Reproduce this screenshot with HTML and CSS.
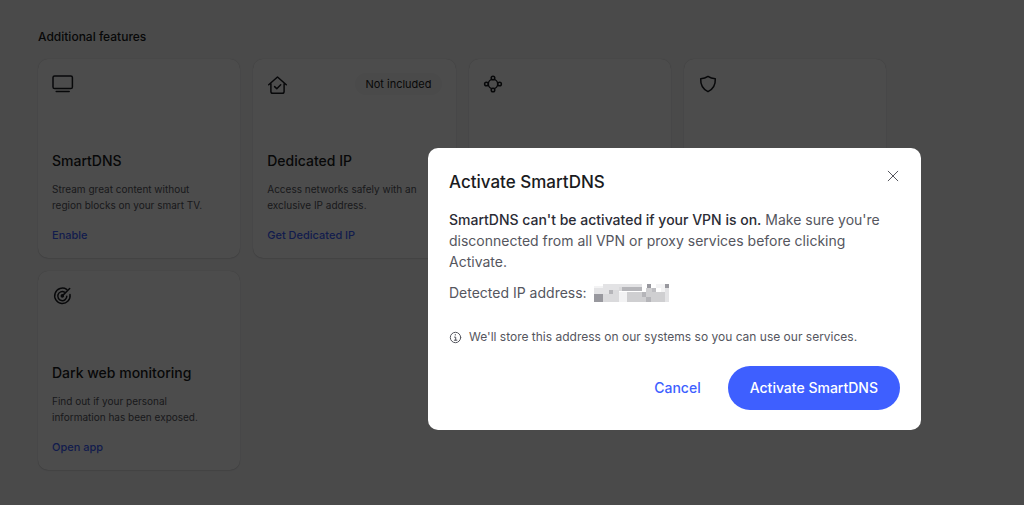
FILE: index.html
```html
<!DOCTYPE html>
<html lang="en">

<head>
    <meta charset="UTF-8">
    <meta name="viewport" content="width=device-width, initial-scale=1.0">
    <title>Additional features</title>

    <link rel="stylesheet" href="styles.css">
</head>

<body>
    <main class="features">
        <h2>Additional features</h2>
        <div class="grid">
            <article class="card">
                <div class="card-top">
                    <svg class="icon" viewBox="0 0 22 22">
                        <rect x="1" y="3" width="19.4" height="12.6" rx="1.6" />
                        <path d="M4.2 18.5h13" />
                    </svg>
                </div>
                <h3>SmartDNS</h3>
                <p>Stream great content without region blocks on your smart TV.</p>
                <a href="#">Enable</a>
            </article>

            <article class="card">
                <div class="card-top">
                    <svg class="icon" viewBox="0 0 22 22">
                        <path d="M1.7 11.8L10.5 4l8.8 7.8M3.9 10.4v8c0 1.2.6 1.8 1.8 1.8h9.6c1.2 0 1.8-.6 1.8-1.8v-8M7.6 13.6l2.2 2.2 3.9-4" />
                    </svg>
                    <span class="badge">Not included</span>
                </div>
                <h3>Dedicated IP</h3>
                <p>Access networks safely with an exclusive IP address.</p>
                <a href="#">Get Dedicated IP</a>
            </article>

            <article class="card">
                <div class="card-top">
                    <svg class="icon" viewBox="0 0 22 22">
                        <circle cx="10" cy="11" r="4.7" />
                        <g class="node">
                            <circle cx="10" cy="5" r="1.8" />
                            <circle cx="10" cy="17" r="1.8" />
                            <circle cx="3.4" cy="11" r="1.8" />
                            <circle cx="16.6" cy="11" r="1.8" />
                        </g>
                    </svg>
                </div>
            </article>

            <article class="card">
                <div class="card-top">
                    <svg class="icon" viewBox="0 0 22 22">
                        <path d="M10 3.4c2.2 1.6 4.4 2.2 7.3 2.3.3 6-1.8 10.2-7.3 13C4.5 15.9 2.4 11.7 2.7 5.7 5.6 5.6 7.8 5 10 3.4z" />
                    </svg>
                </div>
            </article>

            <article class="card">
                <div class="card-top">
                    <svg class="icon" viewBox="0 0 22 22">
                        <path d="M14.7 4.4A7.7 7.7 0 1 0 18 9.6M12.5 7.2A4.5 4.5 0 1 0 14.8 11.2M10.3 10.9L17.7 3.5" />
                        <circle class="dot" cx="10.3" cy="10.9" r="1.8" />
                    </svg>
                </div>
                <h3>Dark web monitoring</h3>
                <p>Find out if your personal information has been exposed.</p>
                <a href="#">Open app</a>
            </article>
        </div>
    </main>

    <!-- Activate dialog -->
    <div class="overlay">
        <section class="modal" role="dialog" aria-modal="true" aria-labelledby="modalTitle">
            <header>
                <h1 id="modalTitle">Activate SmartDNS</h1>
                <button class="close" type="button" aria-label="Close">
                    <svg viewBox="0 0 12 12">
                        <path d="M1.2 1.2l9.6 9.6M10.8 1.2l-9.6 9.6" />
                    </svg>
                </button>
            </header>
            <p><strong>SmartDNS can't be activated if your VPN is on.</strong> Make sure you're disconnected from all VPN or proxy services before clicking Activate.</p>
            <p class="address">
                Detected IP address:
                <svg class="mosaic" viewBox="0 0 225 54" role="img" aria-label="Hidden address" shape-rendering="crispEdges">
                    <path fill="#f3f3f4" d="M0 6h26v24H0z" />
                    <path fill="#e3e3e5" d="M0 12h26v18H0zM26 0h86v18H26zM26 18h18v12H26z" />
                    <path fill="#98989e" d="M0 30h26v24H0z" />
                    <path fill="#dadadc" d="M26 30h32v24H26zM58 18h18v36H58zM76 10h36v12H76z" />
                    <path fill="#b5b5b9" d="M44 18h14v12H44zM84 10h60v12H84zM144 24h12v16H144zM156 40h14v14H156z" />
                    <path fill="#f3f3f4" d="M76 24h24v30H76zM186 0h28v12H186zM202 12h12v12H202z" />
                    <path fill="#cfcfd1" d="M100 24h44v30H100zM144 40h12v14H144zM156 12h30v28H156zM170 24h44v30H170z" />
                    <path fill="#e3e3e5" d="M112 0h32v10H112zM214 12h10v42H214z" />
                    <path fill="#98989e" d="M160 0h10v12H160zM214 0h10v12H214z" />
                    <path fill="#bdbdc1" d="M174 12h12v12H174z" />
                </svg>
            </p>
            <p class="note">
                <svg viewBox="0 0 13 13">
                    <circle cx="6.5" cy="6.5" r="5.2" />
                    <path d="M5.5 6.1h1.2v3M5.3 9.2h2.6M6.3 3.5v.6" />
                </svg>
                We'll store this address on our systems so you can use our services.
            </p>
            <footer>
                <button class="cancel" type="button">Cancel</button>
                <button class="activate" type="button">Activate SmartDNS</button>
            </footer>
        </section>
    </div>
</body>

</html>
```

FILE: styles.css
```css
* {
    box-sizing: border-box;
}

body {
    margin: 0;
    background-color: #f7f7f8;
    color: #1a1b21;
    font-family: Inter, "Liberation Sans", sans-serif;
}

h1,
h2,
h3,
p {
    margin: 0;
    font-weight: 500;
}

button {
    padding: 0;
    border: 0;
    background: none;
    font: inherit;
    cursor: pointer;
}

svg {
    fill: none;
    stroke: currentColor;
    stroke-linecap: round;
    stroke-linejoin: round;
}

/* Feature cards */
.features {
    max-width: 924px;
    padding: 29px 38px 35px;
}

h2 {
    font-size: 12px;
    line-height: 16px;
}

.grid {
    display: grid;
    grid-template-columns: repeat(4, 1fr);
    gap: 13px;
    margin-top: 14px;
}

.card {
    display: flex;
    flex-direction: column;
    min-height: 199px;
    padding: 14px 14px 15px;
    border-radius: 10px;
    background-color: white;
    box-shadow: 0 0 1px rgba(0, 0, 0, 0.25), 0 1px 1px rgba(0, 0, 0, 0.08);
}

.card-top {
    display: flex;
    justify-content: space-between;
    align-items: flex-start;
}

.icon {
    width: 22px;
    height: 22px;
    stroke-width: 1.5;
}

.node {
    fill: white;
}

.dot {
    fill: currentColor;
    stroke: none;
}

.badge {
    padding: 0 10px;
    border-radius: 11px;
    background-color: #f7f7f8;
    font-size: 11px;
    font-weight: 400;
    line-height: 22px;
}

h3 {
    margin-top: auto;
    font-size: 14px;
    line-height: 20px;
}

.card p {
    max-width: 160px;
    margin-top: 10px;
    color: #55565e;
    font-size: 10px;
    font-weight: 400;
    line-height: 16px;
}

.card a {
    margin-top: 14px;
    color: #3e5fff;
    font-size: 11px;
    font-weight: 500;
    line-height: 16px;
    text-decoration: none;
}

/* Dialog */
.overlay {
    position: fixed;
    inset: 0;
    display: flex;
    justify-content: flex-end;
    align-items: flex-start;
    padding: 148px 103px 0 20px;
    background-color: rgba(0, 0, 0, 0.7);
}

.modal {
    width: 100%;
    max-width: 493px;
    padding: 21px 21px 20px;
    border-radius: 10px;
    background-color: white;
}

.modal header {
    display: flex;
    justify-content: space-between;
    align-items: flex-start;
}

h1 {
    font-size: 17px;
    line-height: 26px;
}

.close {
    display: flex;
    padding: 1px;
}

.close svg {
    width: 12px;
    height: 12px;
    color: #55565e;
}

.modal p {
    margin-top: 14px;
    color: #55565e;
    font-size: 14px;
    font-weight: 400;
    line-height: 21px;
}

.modal strong {
    color: #2b2c35;
    font-weight: 500;
}

.modal .address {
    display: flex;
    align-items: center;
    gap: 7px;
    margin-top: 10px;
}

.mosaic {
    width: 75px;
    height: 18px;
    stroke: none;
}

.modal .note {
    display: flex;
    align-items: center;
    gap: 7px;
    margin-top: 25px;
    font-size: 12px;
    line-height: 18px;
}

.note svg {
    width: 13px;
    height: 13px;
}

.modal footer {
    display: flex;
    justify-content: flex-end;
    align-items: center;
    gap: 27px;
    margin-top: 20px;
    font-size: 14px;
    font-weight: 500;
    line-height: 20px;
}

.cancel {
    color: #3e5fff;
}

.activate {
    padding: 12px 22px;
    border-radius: 22px;
    background-color: #3e5fff;
    color: white;
}
```
